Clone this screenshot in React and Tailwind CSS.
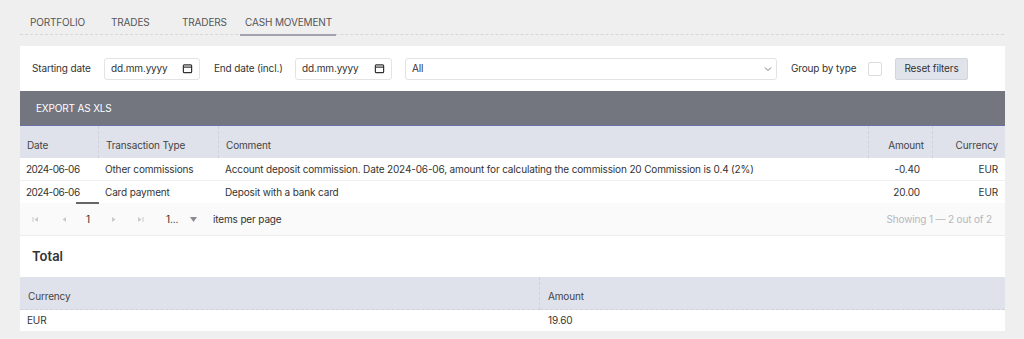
import React from "react";

const CalIcon = () => (
  <svg width="11" height="11" viewBox="0 0 12 12" fill="none" stroke="#333" strokeWidth="1.3">
    <rect x="1.5" y="2" width="9" height="8.5" rx="1" />
    <line x1="1.5" y1="4.5" x2="10.5" y2="4.5" />
  </svg>
);

function DateInput({ className }) {
  return (
    <div className={`flex h-[22px] items-center justify-between rounded-[3px] border border-[#e3e3e6] bg-white pl-[6px] pr-[6px] text-[10px] text-[#333] ${className}`}>
      <span>dd.mm.yyyy</span>
      <CalIcon />
    </div>
  );
}

const PagerIcon = ({ dir, bar }) => (
  <svg width="7" height="7" viewBox="0 0 7 7" fill="#c9c9ce">
    {dir === "left" ? <polygon points="6,1 6,6 2.5,3.5" /> : <polygon points="1,1 1,6 4.5,3.5" />}
    {bar === "left" && <rect x="0.5" y="1" width="1" height="5" />}
    {bar === "right" && <rect x="5.5" y="1" width="1" height="5" />}
  </svg>
);

export default function App() {
  const th = "border-r border-dashed border-[#cfd2da]";
  const hc = "flex h-[32px] items-center bg-[#dfe2ea] pt-[6px] text-[#444]";
  const dt = "tracking-[-0.55px]";
  return (
    <div className="min-h-[339px] w-[1024px] bg-[#efeff0] font-['Inter',sans-serif] tracking-[-0.15px] text-[#333]">
      <div className="px-[20px] pt-[12px]">
        <div className="flex h-[23px] items-start whitespace-nowrap border-b border-dashed border-[#d6d6dc] text-[10px] uppercase text-[#555]">
          <div className="w-[91px] pl-[10px] pt-[3px]">Portfolio</div>
          <div className="w-[71px] pt-[3px]">Trades</div>
          <div className="w-[58px] pt-[3px]">Traders</div>
          <div className="relative h-[23px] w-[96px] pl-[5px] pt-[3px]">
            Cash movement
            <div className="absolute bottom-[-1px] left-0 h-[2px] w-[96px] bg-[#a3a3ae]" />
          </div>
        </div>
      </div>

      <div className="mx-[20px] mt-[11px] w-[985px] bg-white text-[10px]">
        <div className="flex h-[45px] items-center whitespace-nowrap text-[10px] text-[#333]">
          <div className="w-[84px] pl-[12px]">Starting date</div>
          <DateInput className="w-[96px]" />
          <div className="w-[95px] pl-[14px]">End date (incl.)</div>
          <DateInput className="w-[97px]" />
          <div className="ml-[13px] flex h-[22px] w-[372px] items-center justify-between rounded-[3px] border border-[#e3e3e6] pl-[6px] pr-[4px]">
            <span>All</span>
            <svg width="8" height="6" viewBox="0 0 8 6" fill="none" stroke="#777" strokeWidth="1">
              <polyline points="1,1.5 4,4.5 7,1.5" />
            </svg>
          </div>
          <div className="ml-[14px] w-[63px]">Group by type</div>
          <div className="ml-[14px] h-[14px] w-[14px] rounded-[2px] border border-[#dcdce0]" />
          <div className="ml-[13px] flex h-[22px] w-[73px] items-center justify-center rounded-[2px] border border-[#d3d5de] bg-[#e1e3eb]">
            Reset filters
          </div>
        </div>

        <div className="flex h-[35px] items-center border-b border-[#6a70a8] bg-[#73757f] pl-[16px] text-[10px] uppercase text-white">
          Export as XLS
        </div>

        <div className="grid grid-cols-[79px_120px_650px_64px_72px]">
          <div className={`${hc} pl-[7px] ${th}`}>Date</div>
          <div className={`${hc} pl-[7px] ${th}`}>Transaction Type</div>
          <div className={`${hc} pl-[7px] ${th}`}>Comment</div>
          <div className={`${hc} justify-end pr-[8px] ${th}`}>Amount</div>
          <div className={`${hc} justify-end pr-[7px]`}>Currency</div>

          <div className={`flex h-[23px] items-center border-b border-[#f0f0f2] pl-[6px] pt-[1px] ${dt}`}>2024-06-06</div>
          <div className="flex h-[23px] items-center border-b border-[#f0f0f2] pl-[6px] pt-[1px]">Other commissions</div>
          <div className="flex h-[23px] items-center border-b border-[#f0f0f2] pl-[6px] pt-[1px]">
            Account deposit commission. Date 2024-06-06, amount for calculating the commission 20 Commission is 0.4 (2%)
          </div>
          <div className="flex h-[23px] items-center justify-end border-b border-[#f0f0f2] pr-[13px] pt-[1px]">-0.40</div>
          <div className="flex h-[23px] items-center justify-end border-b border-[#f0f0f2] pr-[7px] pt-[1px]">EUR</div>

          <div className={`relative flex h-[22px] items-center pl-[6px] ${dt}`}>
            2024-06-06
            <div className="absolute bottom-[-1px] left-[56px] h-[2px] w-[23px] bg-[#666]" />
          </div>
          <div className="flex h-[22px] items-center pl-[6px]">Card payment</div>
          <div className="flex h-[22px] items-center pl-[6px]">Deposit with a bank card</div>
          <div className="flex h-[22px] items-center justify-end pr-[13px]">20.00</div>
          <div className="flex h-[22px] items-center justify-end pr-[7px]">EUR</div>
        </div>

        <div className="flex h-[33px] items-center border-b border-[#ececef] bg-[#fafafa]">
          <span className="ml-[5px] flex w-[20px] justify-center"><PagerIcon dir="left" bar="left" /></span>
          <span className="ml-[8px] flex w-[20px] justify-center"><PagerIcon dir="left" /></span>
          <span className="ml-[5px] w-[20px] text-center text-[#333]">1</span>
          <span className="ml-[6px] flex w-[20px] justify-center"><PagerIcon dir="right" /></span>
          <span className="ml-[6px] flex w-[20px] justify-center"><PagerIcon dir="right" bar="right" /></span>
          <span className="ml-[16px] w-[17px] text-[#333]">1...</span>
          <span className="flex w-[20px] justify-center">
            <svg width="7" height="5" viewBox="0 0 7 5" fill="#8a8a90"><polygon points="0,0 7,0 3.5,5" /></svg>
          </span>
          <span className="ml-[10px] text-[#333]">items per page</span>
          <span className="ml-auto pr-[13px] text-[#b7b7bd]">Showing 1 — 2 out of 2</span>
        </div>

        <div className="flex h-[41px] items-center pl-[12px] text-[13px] font-semibold tracking-normal text-[#333]">Total</div>

        <div className="grid grid-cols-[520px_465px]">
          <div className="flex h-[33px] items-center border-r border-b border-dashed border-[#cfd2da] bg-[#dfe2ea] pl-[8px] pt-[6px] text-[#444]">Currency</div>
          <div className="flex h-[33px] items-center border-b border-dashed border-[#cfd2da] bg-[#dfe2ea] pl-[8px] pt-[6px] text-[#444]">Amount</div>
          <div className="flex h-[21px] items-center pl-[7px]">EUR</div>
          <div className="flex h-[21px] items-center pl-[8px]">19.60</div>
        </div>
      </div>
    </div>
  );
}
